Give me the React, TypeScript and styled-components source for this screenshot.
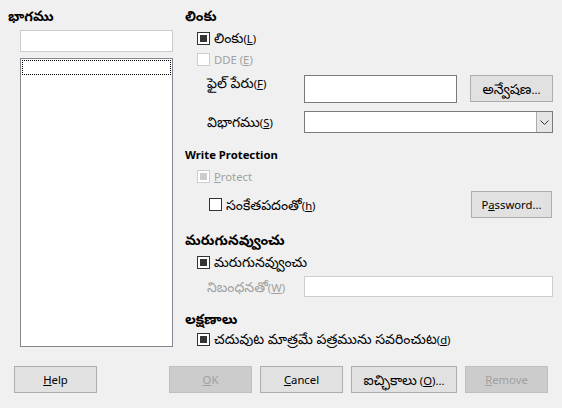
import React from "react";
import styled, { createGlobalStyle } from "styled-components";

const Global = createGlobalStyle`
  html, body { margin: 0; padding: 0; background: #f0f0f0; }
  body { font-family: "Segoe UI", "Noto Sans", "Noto Sans Telugu", "Lato", sans-serif; font-size: 11.3px; color: #000; }
  * { box-sizing: border-box; }
`;

const T = styled.span`
  font-size: 14px;
  line-height: 16px;
`;

const Dialog = styled.div`
  width: 562px;
  height: 408px;
  display: flex;
  flex-direction: column;
  padding-top: 8px;
`;

const Main = styled.div`
  display: flex;
  padding-left: 8px;
  height: 339px;
`;

const LeftCol = styled.div`
  width: 165px;
  display: flex;
  flex-direction: column;
`;

const RightCol = styled.div`
  margin-left: 12px;
  width: 368px;
  display: flex;
  flex-direction: column;
`;

const Heading = styled.div<{ $mt?: number; $bold?: boolean }>`
  height: 16px;
  line-height: 16px;
  margin-top: ${(p) => p.$mt ?? 0}px;
  font-weight: ${(p) => (p.$bold ? 700 : 400)};
  white-space: nowrap;
`;

const TextBox = styled.div<{ $w?: number; $h: number; $light?: boolean; $mt?: number; $ml?: number }>`
  width: ${(p) => (p.$w ? `${p.$w}px` : "auto")};
  height: ${(p) => p.$h}px;
  margin-top: ${(p) => p.$mt ?? 0}px;
  margin-left: ${(p) => p.$ml ?? 0}px;
  background: #fff;
  border: 1px solid ${(p) => (p.$light ? "#cccccc" : "#7a7a7a")};
  flex: none;
`;

const ListBox = styled.div`
  margin-left: 12px;
  margin-top: 6px;
  height: 289px;
  background: #fff;
  border: 1px solid #828790;
  padding: 1px;
`;

const FocusRow = styled.div`
  height: 15px;
  border: 1px dotted #000;
`;

const Row = styled.div<{ $mt: number; $h: number; $indent: number; $top?: boolean }>`
  display: flex;
  align-items: ${(p) => (p.$top ? "flex-start" : "center")};
  height: ${(p) => p.$h}px;
  margin-top: ${(p) => p.$mt}px;
  padding-left: ${(p) => p.$indent}px;
  white-space: nowrap;
`;

const Box = styled.span<{ $checked?: boolean; $disabled?: boolean }>`
  width: 13px;
  height: 13px;
  flex: none;
  border: 1px solid ${(p) => (p.$disabled ? "#cccccc" : "#333333")};
  background: #fff;
  display: flex;
  align-items: center;
  justify-content: center;
  &::after {
    content: "";
    display: ${(p) => (p.$checked ? "block" : "none")};
    width: 7px;
    height: 7px;
    background: ${(p) => (p.$disabled ? "#cccccc" : "#333333")};
  }
`;

const CheckLabel = styled.span<{ $disabled?: boolean }>`
  margin-left: 4px;
  color: ${(p) => (p.$disabled ? "#a0a0a0" : "#000")};
`;

const FieldLabel = styled.span<{ $disabled?: boolean; $pt?: number }>`
  width: 97px;
  flex: none;
  padding-top: ${(p) => p.$pt ?? 0}px;
  color: ${(p) => (p.$disabled ? "#a0a0a0" : "#000")};
`;

const Button = styled.button<{ $w?: number; $disabled?: boolean; $ml?: number; $mr?: number }>`
  width: ${(p) => p.$w ?? 83}px;
  height: 27px;
  margin-left: ${(p) => p.$ml ?? 0}px;
  margin-right: ${(p) => p.$mr ?? 0}px;
  flex: none;
  font: inherit;
  padding: 0;
  background: ${(p) => (p.$disabled ? "#cccccc" : "#e1e1e1")};
  border: 1px solid ${(p) => (p.$disabled ? "#bfbfbf" : "#adadad")};
  color: ${(p) => (p.$disabled ? "#a0a0a0" : "#000")};
  white-space: nowrap;
`;

const Combo = styled.div`
  width: 249px;
  height: 22px;
  background: #fff;
  border: 1px solid #7a7a7a;
  display: flex;
  justify-content: flex-end;
`;

const ComboArrow = styled.div`
  width: 16px;
  height: 100%;
  background: #e5e5e5;
  border-left: 1px solid #acacac;
  display: flex;
  align-items: center;
  justify-content: center;
`;

const Spacer = styled.div`
  flex: 1;
`;

const ButtonRow = styled.div`
  display: flex;
  margin-top: 19px;
  padding-left: 14px;
  padding-right: 14px;
`;

function Check({ checked, disabled, children }: { checked?: boolean; disabled?: boolean; children: React.ReactNode }) {
  return (
    <>
      <Box $checked={checked} $disabled={disabled} />
      <CheckLabel $disabled={disabled}>{children}</CheckLabel>
    </>
  );
}

export default function App() {
  return (
    <Dialog>
      <Global />
      <Main>
        <LeftCol>
          <Heading $bold>
            <T>భాగము</T>
          </Heading>
          <TextBox $h={22} $light $mt={6} $ml={12} />
          <ListBox>
            <FocusRow />
          </ListBox>
        </LeftCol>
        <RightCol>
          <Heading $bold>
            <T>లింకు</T>
          </Heading>
          <Row $mt={6} $h={16} $indent={12}>
            <Check checked>
              <T>లింకు</T>(<u>L</u>)
            </Check>
          </Row>
          <Row $mt={5} $h={16} $indent={12}>
            <Check disabled>
              DDE (<u>E</u>)
            </Check>
          </Row>
          <Row $mt={8} $h={28} $indent={22} $top>
            <FieldLabel $pt={0}>
              <T>ఫైల్ పేరు</T>(<u>F</u>)
            </FieldLabel>
            <TextBox $w={153} $h={28} />
            <Button $ml={13}>
              <T>అన్వేషణ</T>...
            </Button>
          </Row>
          <Row $mt={8} $h={22} $indent={22}>
            <FieldLabel>
              <T>విభాగము</T>(<u>S</u>)
            </FieldLabel>
            <Combo>
              <ComboArrow>
                <svg width="9" height="5" viewBox="0 0 9 5">
                  <path d="M0.5 0.5 L4.5 4.5 L8.5 0.5" fill="none" stroke="#333" strokeWidth="1" />
                </svg>
              </ComboArrow>
            </Combo>
          </Row>
          <Heading $mt={14} $bold>
            Write Protection
          </Heading>
          <Row $mt={5} $h={16} $indent={12}>
            <Check checked disabled>
              <u>P</u>rotect
            </Check>
          </Row>
          <Row $mt={7} $h={27} $indent={24}>
            <Check>
              <T>సంకేతపదంతో</T>(<u>h</u>)
            </Check>
            <Spacer />
            <Button $w={81} $mr={1}>
              P<u>a</u>ssword...
            </Button>
          </Row>
          <Heading $mt={14} $bold>
            <T>మరుగునవ్వుంచు</T>
          </Heading>
          <Row $mt={6} $h={16} $indent={12}>
            <Check checked>
              <T>మరుగునవ్వుంచు</T>
            </Check>
          </Row>
          <Row $mt={6} $h={21} $indent={22}>
            <FieldLabel $disabled>
              <T>నిబంధనతో</T>(<u>W</u>)
            </FieldLabel>
            <TextBox $w={249} $h={21} $light />
          </Row>
          <Heading $mt={14} $bold>
            <T>లక్షణాలు</T>
          </Heading>
          <Row $mt={4} $h={16} $indent={12}>
            <Check checked>
              <T>చదువుట మాత్రమే పత్రమును సవరించుట</T>(<u>d</u>)
            </Check>
          </Row>
        </RightCol>
      </Main>
      <ButtonRow>
        <Button>
          <u>H</u>elp
        </Button>
        <Spacer />
        <Button $disabled>
          <u>O</u>K
        </Button>
        <Button $ml={8}>
          <u>C</u>ancel
        </Button>
        <Button $ml={8} $w={106}>
          <T>ఐచ్ఛికాలు</T> (<u>O</u>)...
        </Button>
        <Button $ml={8} $disabled>
          <u>R</u>emove
        </Button>
      </ButtonRow>
    </Dialog>
  );
}
